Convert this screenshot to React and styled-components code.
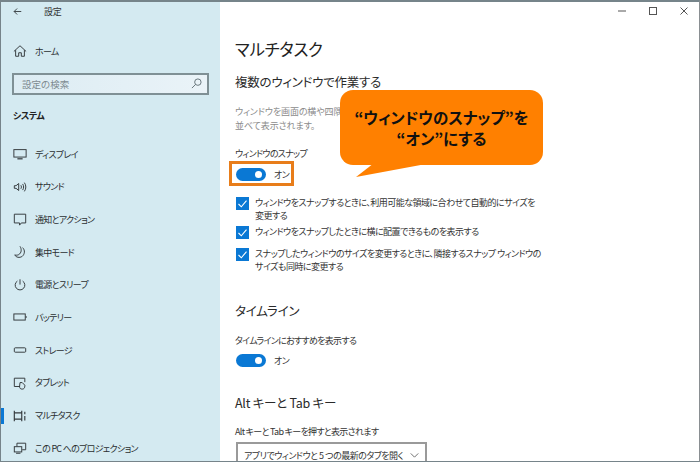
import React from 'react'
import styled, { createGlobalStyle } from 'styled-components'

const Global = createGlobalStyle`
  html, body { margin: 0; padding: 0; background: #fff; }
  body {
    font-family: "Noto Sans CJK JP", "Noto Sans", sans-serif;
    font-feature-settings: "palt";
    color: #222;
  }
  * { box-sizing: border-box; }
`

const Window = styled.div`
  position: relative;
  display: flex;
  width: 700px;
  height: 462px;
  overflow: hidden;
  background: #fff;
  border: 1px solid #76848a;
  border-top-width: 2px;
  border-right-color: #8a8f92;
`

const Sidebar = styled.aside`
  display: flex;
  flex-direction: column;
  width: 219px;
  flex: none;
  background: #d4eaf1;
`

const BackRow = styled.div`
  display: flex;
  align-items: center;
  flex: none;
  height: 18px;
  padding-left: 12px;
  font-size: 9px;
  letter-spacing: -0.3px;
  color: #333;
  svg { margin-right: 22px; }
`

const Row = styled.div`
  position: relative;
  display: flex;
  align-items: center;
  flex: none;
  height: 32.7px;
  margin-top: ${p => p.$top || 0}px;
  padding-left: 12px;
  font-size: 9px;
  letter-spacing: -0.7px;
  white-space: nowrap;
  color: #2b2f31;
  svg { flex: none; margin-right: 8px; }
`

const ActiveMark = styled.span`
  position: absolute;
  left: 0;
  top: 9px;
  width: 3px;
  height: 16px;
  background: #0a78d4;
`

const SearchBox = styled.div`
  display: flex;
  align-items: center;
  justify-content: space-between;
  flex: none;
  height: 22px;
  margin: 5px 11px 0 11px;
  padding: 0 5px 0 8px;
  border: 2px solid #7f9095;
  background: linear-gradient(90deg, #dcecf3, #eaf3f8);
  font-size: 9.5px;
  color: #7d8a90;
`

const GroupTitle = styled.div`
  flex: none;
  margin: 11px 0 12px 12px;
  font-size: 9px;
  font-weight: 700;
  letter-spacing: -0.5px;
  line-height: 20px;
  color: #222;
`

const Main = styled.main`
  flex: 1;
  padding: 32px 0 0 15px;
`

const Title = styled.h1`
  margin: 0;
  font-size: 16.5px;
  font-weight: 400;
  letter-spacing: -0.3px;
  line-height: 30px;
  color: #222;
`

const Heading = styled.h2`
  margin: ${p => p.$top}px 0 0;
  font-size: 12.5px;
  font-weight: 400;
  letter-spacing: -0.25px;
  line-height: 20px;
  color: #2a2a2a;
`

const Description = styled.p`
  margin: 13px 0 0;
  white-space: nowrap;
  font-size: 9px;
  letter-spacing: -0.1px;
  line-height: 14px;
  color: #8b8b8b;
`

const Label = styled.div`
  margin-top: ${p => p.$top}px;
  font-size: 9px;
  letter-spacing: -0.7px;
  line-height: 14px;
  color: #333;
`

const ToggleRow = styled.div`
  display: flex;
  align-items: center;
  gap: 8px;
  height: 13px;
  margin-top: ${p => p.$top}px;
  margin-left: 1px;
  font-size: 9px;
  letter-spacing: -0.5px;
  color: #333;
`

const Track = styled.span`
  position: relative;
  width: 30px;
  height: 13px;
  border-radius: 7px;
  background: #0a78d4;
  &::after {
    content: '';
    position: absolute;
    right: 4px;
    top: 3px;
    width: 7px;
    height: 7px;
    border-radius: 50%;
    background: #fff;
  }
`

const Highlight = styled.div`
  position: absolute;
  left: 228px;
  top: 159px;
  width: 65px;
  height: 25px;
  border: 3px solid #e87d1a;
`

const Checks = styled.div`
  display: flex;
  flex-direction: column;
  margin-top: 15px;
  margin-left: 1px;
`

const CheckRow = styled.div`
  display: flex;
  align-items: flex-start;
  gap: 6px;
  margin-top: ${p => p.$top}px;
  font-size: 9px;
  letter-spacing: -0.52px;
  line-height: 13px;
  white-space: nowrap;
  color: #333;
  svg { flex: none; margin-top: 1px; }
`

const Select = styled.div`
  display: flex;
  align-items: center;
  justify-content: space-between;
  width: 191px;
  height: 26px;
  margin: 3px 0 0 1px;
  padding: 0 6px 0 6px;
  border: 2px solid #9a9a9a;
  font-size: 9px;
  letter-spacing: -0.5px;
  white-space: nowrap;
  color: #333;
`

const Controls = styled.div`
  position: absolute;
  right: 11px;
  top: 5px;
  display: flex;
  align-items: center;
  gap: 23px;
`

const Callout = styled.div`
  position: absolute;
  left: 339px;
  top: 88px;
  display: flex;
  flex-direction: column;
  align-items: center;
  justify-content: center;
  width: 203px;
  height: 75px;
  border-radius: 13px;
  background: #ff8000;
  font-size: 15.5px;
  font-weight: 700;
  line-height: 21px;
  color: #111;
  &::after {
    content: '';
    position: absolute;
    left: 16px;
    top: 74px;
    width: 70px;
    height: 13px;
    background: #ff8000;
    clip-path: polygon(0 100%, 24% 0, 100% 0);
  }
`

const Stroke = ({ children }) => (
  <svg width="14" height="14" viewBox="0 0 16 16" fill="none" stroke="#33393c" strokeWidth="1.1">
    {children}
  </svg>
)

const navItems = [
  { label: 'ディスプレイ', icon: <><rect x="1" y="3" width="14" height="8.5" /><path d="M5 13.5h6" strokeWidth="1.4" /></> },
  { label: 'サウンド', icon: <><path d="M1.5 6.5h2L6.5 4v8L3.5 9.5h-2z" /><path d="M9 6c.8 1.2.8 2.8 0 4M11 4.5c1.5 2 1.5 5 0 7M13 3c2.2 3 2.2 7 0 10" /></> },
  { label: '通知とアクション', icon: <path d="M1.5 2.5h13v10H9.5L7.5 15v-2.500h-6z" /> },
  { label: '集中モード', icon: <path d="M8 1.500c2 3 2 7.500-1.500 9.500-1.500.8-3 .8-4.500.3 1.500 3 5.500 3.700 8.500 1.700 3-2.500 3.500-7 .5-10" /> },
  { label: '電源とスリープ', icon: <><path d="M8 1.500v6" /><path d="M5 3.500a5.500 5.500 0 1 0 6 0" /></> },
  { label: 'バッテリー', icon: <><rect x="1" y="4.500" width="13" height="7" /><path d="M15 7v2" /></> },
  { label: 'ストレージ', icon: <rect x="1.500" y="5.500" width="13" height="5" rx="1" /> },
  { label: 'タブレット', icon: <><path d="M8 12H1.500V2.500h12V7" /><path d="M8 7.500h2.500l3 3v1c0 2-1 3.500-3 3.500s-3-1-3-3z" /></> },
  { label: 'マルチタスク', active: true, icon: <><path d="M1.500 2v12M10 2v12M1.500 4.500H10v7H1.500M13.500 3v3M13.500 8v5" strokeWidth="1.300" /></> },
  { label: 'この PC へのプロジェクション', icon: <><path d="M4.500 6V2.500h10V10h-4" /><rect x="1.500" y="6.500" width="8.500" height="6" /><path d="M3.500 14h5" /></> },
]

const Check = () => (
  <svg width="13" height="13" viewBox="0 0 13 13">
    <rect width="13" height="13" fill="#0a78d4" />
    <path d="M2.500 7l2.800 2.800 5.200-6.200" fill="none" stroke="#fff" strokeWidth="1.100" />
  </svg>
)

export default function App() {
  return (
    <>
      <Global />
      <Window>
        <Sidebar>
          <BackRow>
            <svg width="9" height="9" viewBox="0 0 12 12" fill="none" stroke="#33393c" strokeWidth="1.200">
              <path d="M11 6H1.500M5.500 2L1.500 6l4 4" />
            </svg>
            設定
          </BackRow>
          <Row $top={15}>
            <Stroke>
              <path d="M1 8.500L8 2l7 6.500M3 7v7h3.500v-4h3v4H13V7" />
            </Stroke>
            ホーム
          </Row>
          <SearchBox>
            設定の検索
            <svg width="11" height="11" viewBox="0 0 12 12" fill="none" stroke="#5f6d73" strokeWidth="1">
              <circle cx="7.500" cy="4.500" r="3.500" />
              <path d="M5 7l-4 4" />
            </svg>
          </SearchBox>
          <GroupTitle>システム</GroupTitle>
          {navItems.map(item => (
            <Row key={item.label}>
              {item.active && <ActiveMark />}
              <Stroke>{item.icon}</Stroke>
              {item.label}
            </Row>
          ))}
        </Sidebar>
        <Main>
          <Title>マルチタスク</Title>
          <Heading $top={8}>複数のウィンドウで作業する</Heading>
          <Description>
            ウィンドウを画面の横や四隅にドラッグすると、
            <br />
            並べて表示されます。
          </Description>
          <Label $top={14}>ウィンドウのスナップ</Label>
          <ToggleRow $top={7}>
            <Track />
            オン
          </ToggleRow>
          <Checks>
            <CheckRow $top={0}>
              <Check />
              <span>
                ウィンドウをスナップするときに、利用可能な領域に合わせて自動的にサイズを
                <br />
                変更する
              </span>
            </CheckRow>
            <CheckRow $top={3}>
              <Check />
              <span>ウィンドウをスナップしたときに横に配置できるものを表示する</span>
            </CheckRow>
            <CheckRow $top={8}>
              <Check />
              <span>
                スナップしたウィンドウのサイズを変更するときに、隣接するスナップ ウィンドウの
                <br />
                サイズも同時に変更する
              </span>
            </CheckRow>
          </Checks>
          <Heading $top={28}>タイムライン</Heading>
          <Label $top={13}>タイムラインにおすすめを表示する</Label>
          <ToggleRow $top={6}>
            <Track />
            オン
          </ToggleRow>
          <Heading $top={26}>Alt キーと Tab キー</Heading>
          <Label $top={12}>Alt キーと Tab キーを押すと表示されます</Label>
          <Select>
            アプリでウィンドウと 5 つの最新のタブを開く
            <svg width="9" height="5" viewBox="0 0 10 6" fill="none" stroke="#555" strokeWidth="1">
              <path d="M.5.500L5 5 9.500.500" />
            </svg>
          </Select>
        </Main>
        <Controls>
          <svg width="8" height="2" viewBox="0 0 8 2"><path d="M0 1h8" stroke="#555" /></svg>
          <svg width="8" height="8" viewBox="0 0 8 8" fill="none"><rect x=".5" y=".5" width="7" height="7" stroke="#555" /></svg>
          <svg width="8" height="8" viewBox="0 0 8 8" fill="none"><path d="M.5.500l7 7M7.500.500l-7 7" stroke="#555" /></svg>
        </Controls>
        <Highlight />
        <Callout>
          <span>“ウィンドウのスナップ”を</span>
          <span>“オン”にする</span>
        </Callout>
      </Window>
    </>
  )
}
